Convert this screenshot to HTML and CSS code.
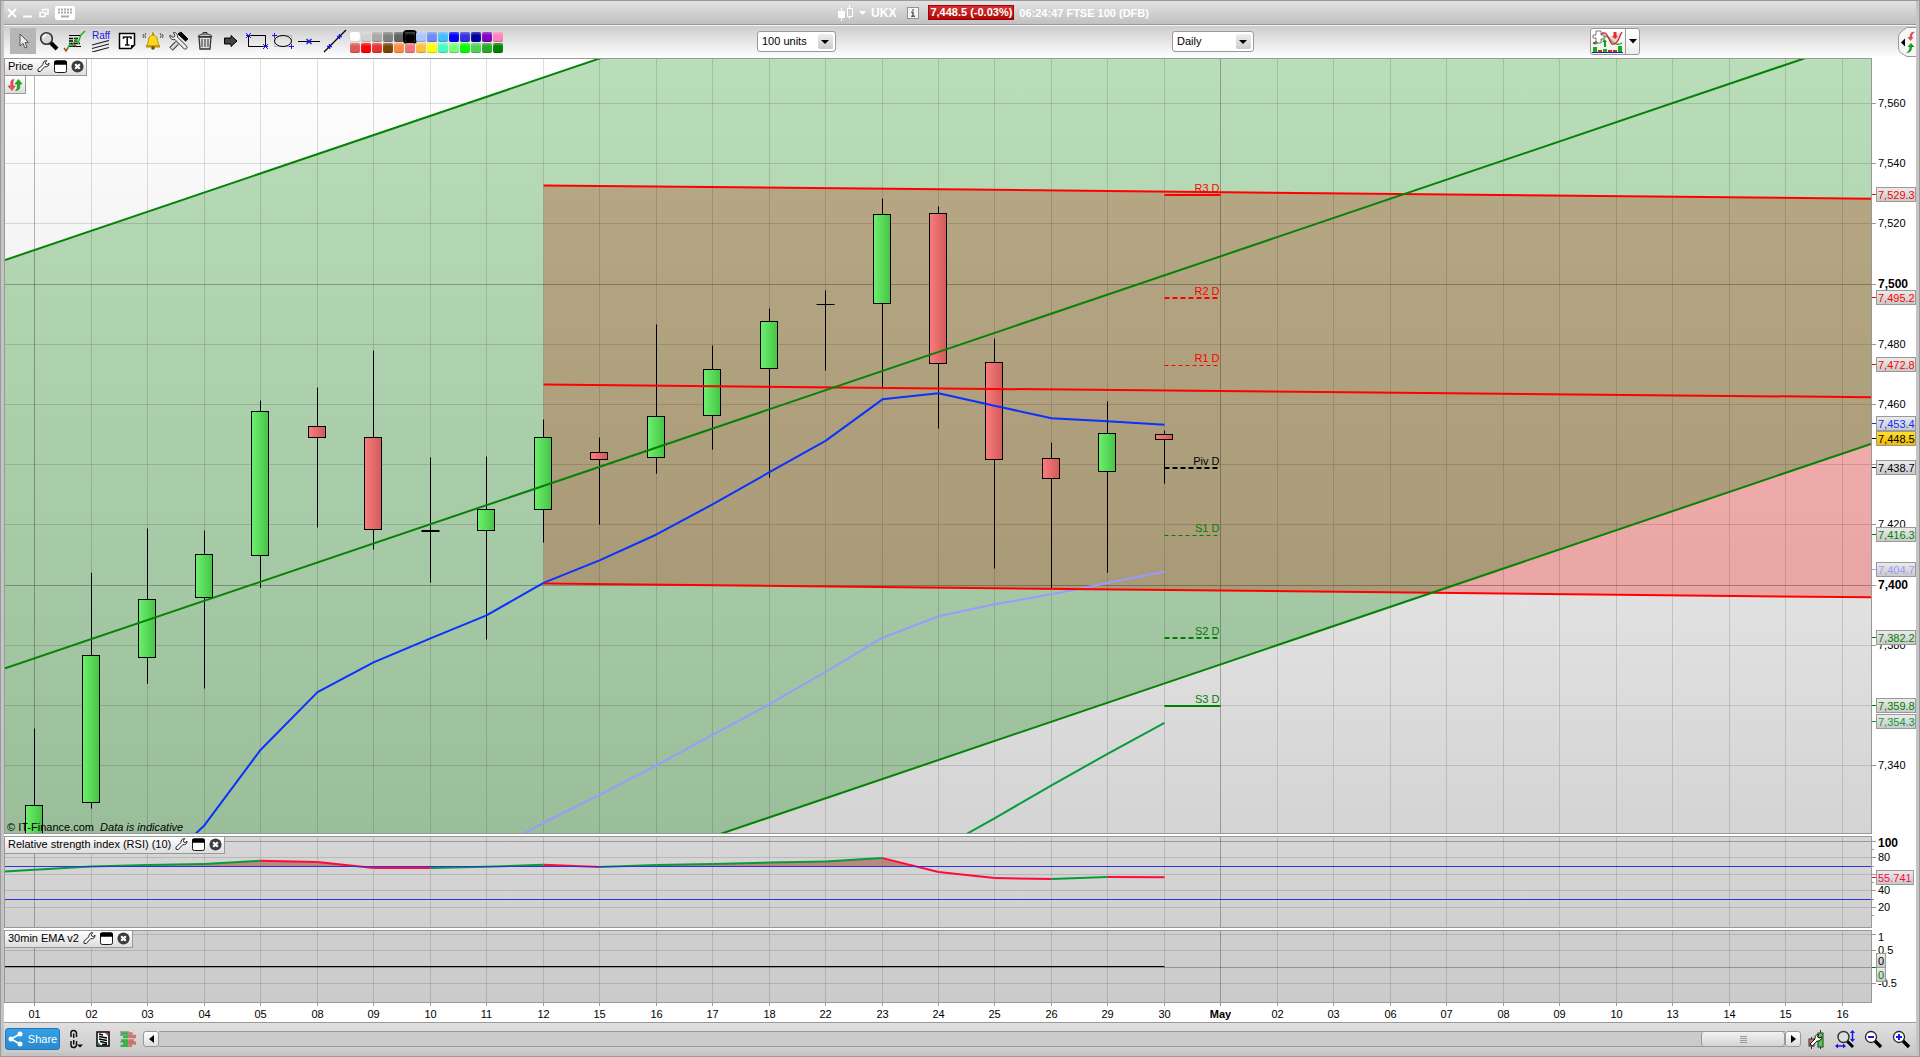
FILE: index.html
```
<!DOCTYPE html>
<html lang="en">
<head>
    <meta charset="UTF-8">
    <meta name="viewport" content="width=device-width, initial-scale=1.0">
    <title>UKX - FTSE 100 (DFB)</title>
    <link rel="stylesheet" href="styles.css">
</head>
<body>
    <!-- Shared symbols for the panel headers -->
    <svg class="symbols" aria-hidden="true">
        <defs>
            <symbol id="i-wrench" viewBox="0 0 14 14">
                <path d="M1 10.5L6.5 5.5C6 3 8 1 10.5 1.2L9 3.2L9.5 5L11.2 5.4L13 4C13 6.8 10.8 8.4 8.4 7.6L3.5 13L1.2 12.8Z" fill="#fff" stroke="#111"/>
            </symbol>
            <symbol id="i-window" viewBox="0 0 14 14">
                <rect x="0.5" y="1" width="13" height="12.5" rx="2" fill="#fff" stroke="#000"/>
                <path d="M0 5V2.5Q0 0.5 2 0.5H12Q14 0.5 14 2.5V5Z" fill="#000"/>
            </symbol>
            <symbol id="i-close" viewBox="0 0 14 14">
                <circle cx="7" cy="7" r="6.5" fill="#3c3c3c"/>
                <path d="M4.5 4.5L9.5 9.5M9.5 4.5L4.5 9.5" stroke="#fff" stroke-width="2.4"/>
            </symbol>
            <symbol id="i-swap" viewBox="0 0 16 14">
                <path d="M7 1.5C4.5 1.5 3.8 3 3.8 5V8H1L5 12.5L8.2 8H6V5C6 3.6 6.2 2.4 7 1.5Z" fill="#e85858" stroke="#c03030" stroke-width="0.6"/>
                <path d="M8.5 12.5C11.5 12.5 12.8 11 12.8 9V6H15L11.5 1.5L8 6H10.3V9C10.3 10.6 9.8 11.8 8.5 12.5Z" fill="#1fae1f" stroke="#108010" stroke-width="0.6"/>
            </symbol>
        </defs>
    </svg>

    <div class="window">
        <header class="titlebar">
            <div class="window-buttons">
                <button aria-label="Close"><svg width="10" height="10"><path d="M1 1L9 9M9 1L1 9" stroke="#fff" stroke-width="2"/></svg></button>
                <button aria-label="Minimise"><svg width="10" height="10"><path d="M0 8.5H9" stroke="#fff" stroke-width="2"/></svg></button>
                <button aria-label="Restore"><svg width="10" height="10"><path d="M3.5 3V1.5H9V6H7M1 4.5H6V8.5H1Z" fill="none" stroke="#fff" stroke-width="1.5"/></svg></button>
                <button aria-label="Keyboard">
                    <svg width="20" height="14">
                        <rect width="20" height="14" rx="2" fill="#fff"/>
                        <path d="M3 3.5H17M3 6.5H17" stroke="#aaa" stroke-width="2" stroke-dasharray="2 1"/>
                        <path d="M6 10.5H14" stroke="#aaa" stroke-width="2"/>
                    </svg>
                </button>
            </div>
            <div class="instrument">
                <svg width="16" height="18">
                    <path d="M3.5 4V17M11.5 1V15" stroke="#fff"/>
                    <rect x="0" y="7" width="7" height="7" fill="#fff"/>
                    <rect x="9.5" y="4.5" width="5" height="8" fill="#cfcfcf" stroke="#fff"/>
                </svg>
                <svg width="7" height="4"><path d="M0 0H7L3.5 4Z" fill="#fff"/></svg>
                <span class="ticker">UKX</span>
                <svg width="12" height="12">
                    <rect x="0.5" y="0.5" width="11" height="11" fill="#f4f4f4" stroke="#8a93a5"/>
                    <path d="M6 2.2V3.8M4.2 5.2H6V9M4.2 9.3H8" fill="none" stroke="#555" stroke-width="1.5"/>
                </svg>
                <span class="quote">7,448.5 (-0.03%)</span>
                <span>06:24:47 FTSE 100 (DFB)</span>
            </div>
        </header>

        <div class="toolbar">
            <div class="tools">
                <button class="tool active" aria-label="Pointer">
                    <svg width="24" height="24"><path d="M9 5V17L12 14.3L14 19L16 18.2L14 13.6H17.5Z" fill="#eee" stroke="#555"/></svg>
                </button>
                <button class="tool" aria-label="Magnifier">
                    <svg width="24" height="24">
                        <path d="M13.5 13.5L20 20" stroke="#000" stroke-width="4"/>
                        <circle cx="9.5" cy="9.5" r="5.8" fill="#d8d8d8" stroke="#333" stroke-width="1.6"/>
                        <path d="M6 9Q6.5 6 9.5 6" fill="none" stroke="#fff" stroke-width="1.6"/>
                    </svg>
                </button>
                <button class="tool" aria-label="Indicators">
                    <svg width="24" height="24">
                        <path d="M6 6.5H18M6 17.5H18" stroke="#000"/>
                        <path d="M6 9.5H16M6 12H14M6 14.5H17" stroke="#000" stroke-width="1.4" stroke-dasharray="4 1"/>
                        <path d="M1 19L3 22L5 19M9 15L13 17" fill="none" stroke="#e02020" stroke-width="1.4"/>
                        <path d="M3 22L7 15L9 17L13 10L15 14L18 6L22 2" fill="none" stroke="#20b030" stroke-width="1.4"/>
                    </svg>
                </button>
                <button class="tool raff" aria-label="Raff regression">
                    <span>Raff</span>
                    <svg width="20" height="12"><path d="M1 5L18 0.5M1 8.5L18 4M1 12L18 7.5" stroke="#222" stroke-width="1.2"/></svg>
                </button>
                <button class="tool" aria-label="Text">
                    <svg width="24" height="24">
                        <path d="M4.5 4.5H19.5V16L16 19.5H4.5Z" fill="#fff" stroke="#000" stroke-width="1.5"/>
                        <path d="M16 19V16H19.5Z" fill="#000"/>
                        <path d="M8.5 10V8H16V10M12.2 8V16M10 16H14.5" fill="none" stroke="#111" stroke-width="1.6"/>
                    </svg>
                </button>
                <button class="tool" aria-label="Alert">
                    <svg width="24" height="24">
                        <path d="M5 17C7.5 15 7 12 8 9C8.7 7 10 6.2 12 6.2S15.3 7 16 9C17 12 16.5 15 19 17Z" fill="#f8d820" stroke="#c09000"/>
                        <path d="M12 3.5V6M5 17.5H19" stroke="#c09000" stroke-width="2"/>
                        <circle cx="12" cy="19" r="1.8" fill="#665500"/>
                        <path d="M5 4Q3 6.5 4.5 9M2.5 5Q1.5 7 2.5 9M19 4Q21 6.5 19.5 9M21.5 5Q22.5 7 21.5 9" fill="none" stroke="#555"/>
                    </svg>
                </button>
                <button class="tool" aria-label="Settings">
                    <svg width="24" height="24">
                        <path d="M10 14L4 20" stroke="#444" stroke-width="5"/>
                        <path d="M10 14L4.5 19.5" stroke="#ddd" stroke-width="2.6"/>
                        <path d="M11 5L14 3L21 10L18.5 12Z" fill="#000" stroke="#000"/>
                        <path d="M3 6L6 8.5L8 7L6.5 3.5C9 3 11 5.5 10.3 8L20 17.5C20.5 19.5 19 20.5 17.3 20L8 10.5C5 11.5 2.5 9 3 6Z" fill="#eee" stroke="#333"/>
                    </svg>
                </button>
                <button class="tool" aria-label="Delete">
                    <svg width="24" height="24">
                        <path d="M6 8H18L17 20H7Z" fill="#ddd" stroke="#333" stroke-width="1.3"/>
                        <path d="M9 10V18M12 10V18M15 10V18" stroke="#555" stroke-width="1.3"/>
                        <path d="M5 7.5Q6 5 12 5T19 7.5Z" fill="#ccc" stroke="#333"/>
                        <path d="M10 5V3.5H14V5" fill="none" stroke="#333"/>
                    </svg>
                </button>
                <button class="tool" aria-label="Arrow">
                    <svg width="24" height="24"><path d="M5.5 9H12V6.5L18 12L12 17.5V15H5.5Z" fill="#444" stroke="#000"/></svg>
                </button>
                <button class="tool" aria-label="Rectangle">
                    <svg width="24" height="24">
                        <rect x="3.5" y="6.5" width="17" height="11" fill="none" stroke="#000"/>
                        <path d="M1 4L6 9M6 4L1 9M1 6.5H6M18 15L23 20M23 15L18 20M18 17.5H23" stroke="#1818ee"/>
                    </svg>
                </button>
                <button class="tool" aria-label="Ellipse">
                    <svg width="24" height="24">
                        <rect x="3.5" y="6.5" width="17" height="11" fill="none" stroke="#bbb"/>
                        <ellipse cx="12" cy="12" rx="8.5" ry="5.5" fill="none" stroke="#000"/>
                        <path d="M1 6.5H6M3.5 4V9M18 17.5H23M20.5 15V20" stroke="#1818ee"/>
                    </svg>
                </button>
                <button class="tool" aria-label="Horizontal line">
                    <svg width="24" height="24">
                        <path d="M1 12.5H23" stroke="#000"/>
                        <path d="M9.5 10L14.5 15M14.5 10L9.5 15" stroke="#1818ee" stroke-width="1.4"/>
                    </svg>
                </button>
                <button class="tool" aria-label="Trend line">
                    <svg width="24" height="24">
                        <path d="M1 23L23 1" stroke="#000" stroke-width="1.3"/>
                        <path d="M4 17.5H9M6.5 15V20M14 7.5H19M16.5 5V10" stroke="#1818ee" stroke-width="1.4"/>
                    </svg>
                </button>
                <div class="palette" id="palette"></div>
            </div>
            <div class="toolbar-cell">
                <span class="picker"><select class="units" aria-label="Units"><option>100 units</option></select></span>
            </div>
            <div class="toolbar-cell">
                <span class="picker"><select class="period" aria-label="Period"><option>Daily</option></select></span>
            </div>
            <div class="toolbar-cell spread">
                <div class="indicator">
                    <button aria-label="Add indicator">
                        <svg width="34" height="24">
                            <path d="M2 14C8 18 11 4 17 8C21 12 24 18 31 14" fill="none" stroke="#20a030" stroke-width="1.4"/>
                            <path d="M2 14C9 14 8 2 14 4C18 6 19 17 23 15C28 13 27 10 31 3" fill="#e0b0b0" fill-opacity="0.5" stroke="#d02020" stroke-width="1.3"/>
                            <path d="M5 2H10V6H13V10H10V14H7L5 12V9H2V6H5Z" fill="#fff" stroke="#778"/>
                            <path d="M13 18V13H11L13.5 10L16 13H15V18Z" fill="#10a010"/>
                            <path d="M22.5 3V7H21L24 10L27 7H25.5V3Z" fill="#e03030"/>
                            <path d="M4 23V18M14 23V20M29 23V17" stroke="#10b010" stroke-width="4"/>
                            <path d="M9 23V21M19 23V21M24 23V21" stroke="#c03030" stroke-width="4"/>
                            <path d="M1 23.5H32" stroke="#2222aa"/>
                        </svg>
                    </button>
                    <button class="drop" aria-label="Indicator list"><svg width="8" height="5"><path d="M0 0H8L4 4.5Z"/></svg></button>
                </div>
                <button class="side-tab" aria-label="Open order panel">
                    <svg width="18" height="30">
                        <path d="M18 0.5H9L3 5Q0.5 7 0.5 10V21Q0.5 24 3 26L9 29.5H18" fill="#f6f6f6" stroke="#999"/>
                        <path d="M3 15.5L7 11.5V19.5Z"/>
                        <path d="M17 5Q12 4 11.5 10H9.5L12.5 14L15.5 10H14Q14 6.5 17 5Z" fill="#e05050"/>
                        <path d="M8 26Q14 26 14 20H16.5L13 16L9.5 20H11.5Q11.5 24 8 26Z" fill="#1a9a1a"/>
                    </svg>
                </button>
            </div>
        </div>

        <main class="charts">
            <section class="panel price">
                <div class="plot">
                    <svg id="price-plot"></svg>
                    <div class="panel-head">
                        <div class="panel-title">
                            <span>Price</span>
                            <button aria-label="Configure price"><svg width="13" height="14"><use href="#i-wrench"/></svg></button>
                            <button aria-label="Detach price"><svg width="13" height="13"><use href="#i-window"/></svg></button>
                            <button aria-label="Close price"><svg width="13" height="13"><use href="#i-close"/></svg></button>
                        </div>
                        <button class="swap" aria-label="Buy or sell"><svg width="16" height="14"><use href="#i-swap"/></svg></button>
                    </div>
                    <p class="copyright">© IT-Finance.com&nbsp; <em>Data is indicative</em></p>
                </div>
                <svg class="axis" id="price-axis"></svg>
            </section>
            <section class="panel rsi">
                <div class="plot">
                    <svg id="rsi-plot"></svg>
                    <div class="panel-head">
                        <div class="panel-title">
                            <span>Relative strength index (RSI) (10)</span>
                            <button aria-label="Configure RSI"><svg width="13" height="14"><use href="#i-wrench"/></svg></button>
                            <button aria-label="Detach RSI"><svg width="13" height="13"><use href="#i-window"/></svg></button>
                            <button aria-label="Close RSI"><svg width="13" height="13"><use href="#i-close"/></svg></button>
                        </div>
                    </div>
                </div>
                <svg class="axis" id="rsi-axis"></svg>
            </section>
            <section class="panel ema">
                <div class="plot">
                    <svg id="ema-plot"></svg>
                    <div class="panel-head">
                        <div class="panel-title">
                            <span>30min EMA v2</span>
                            <button aria-label="Configure EMA"><svg width="13" height="14"><use href="#i-wrench"/></svg></button>
                            <button aria-label="Detach EMA"><svg width="13" height="13"><use href="#i-window"/></svg></button>
                            <button aria-label="Close EMA"><svg width="13" height="13"><use href="#i-close"/></svg></button>
                        </div>
                    </div>
                </div>
                <svg class="axis" id="ema-axis"></svg>
            </section>
            <svg class="dates" id="dates"></svg>
        </main>

        <footer class="bottombar">
            <button class="share">
                <svg width="15" height="16">
                    <path d="M12 3L3 8L12 13" fill="none" stroke="#fff" stroke-width="1.6"/>
                    <circle cx="12" cy="3" r="2.5" fill="#fff"/><circle cx="3" cy="8" r="2.5" fill="#fff"/><circle cx="12" cy="13" r="2.5" fill="#fff"/>
                </svg>
                Share
            </button>
            <div class="bottom-tools">
                <button aria-label="Link charts">
                    <svg width="18" height="20">
                        <path d="M3 8V4Q3 1.5 5.5 1.5T8.5 4V8M5.7 4.5V9M3 12V16Q3 18.5 5.5 18.5T8.5 16V12M5.7 11V15.5" fill="none" stroke="#111" stroke-width="1.5"/>
                        <path d="M9 15.5H15L12 18.5Z"/>
                    </svg>
                </button>
                <button aria-label="Report">
                    <svg width="14" height="16">
                        <rect x="1" y="1" width="12" height="14" fill="#fff" stroke="#000" stroke-width="1.5"/>
                        <path d="M3 3L7 4M3 5.5L11 7M3 8L11 9.500M4 10.500L11 12M6 13.500H11" stroke="#000" stroke-width="1.300"/>
                        <path d="M9 2H12V5Z" fill="#e04040"/><path d="M2 14V11L5 14Z" fill="#20a020"/>
                    </svg>
                </button>
                <button aria-label="Market depth">
                    <svg width="17" height="16">
                        <path d="M0.5 2.5H8.5M3 6H8.5M1 9.5H8.5M3 12.5H8.5M0.5 15H8.5" stroke="#30b840" stroke-width="2.6"/>
                        <path d="M8.5 2.5H12.5M8.5 6H16M8.5 9.5H14M8.5 12.5H16M8.5 15H12" stroke="#e46c6c" stroke-width="2.6"/>
                        <path d="M0 0.8H9M0 4.3H9M8.5 4.3H16M0 11H16" stroke="#555" stroke-width="0.6"/>
                    </svg>
                </button>
            </div>
            <div class="scrollbar">
                <button class="scroll-end" aria-label="Scroll left"><svg width="5" height="8"><path d="M5 0V8L0 4Z"/></svg></button>
                <div class="track"><div class="thumb"><svg width="7" height="7"><path d="M0 0.5H7M0 2.5H7M0 4.5H7M0 6.5H7" stroke="#999"/></svg></div></div>
                <button class="scroll-end" aria-label="Scroll right"><svg width="5" height="8"><path d="M0 0V8L5 4Z"/></svg></button>
            </div>
            <div class="zoom-tools">
                <button aria-label="Chart settings">
                    <svg width="20" height="20">
                        <rect x="11" y="4" width="5" height="14" fill="#48d048" stroke="#333"/><path d="M13.5 1V4M13.5 18V20M4.5 8V20" stroke="#333"/>
                        <rect x="2" y="10" width="5" height="7" fill="#e06c6c" stroke="#333"/>
                        <path d="M3 15L8 10C7.5 7 9 5.5 11.5 5.5L10.5 8L12 9L14.5 8C14.5 11 12.5 12.5 10 12L5.5 17Z" fill="#fff" stroke="#111"/>
                    </svg>
                </button>
                <button aria-label="Fit zoom">
                    <svg width="20" height="20">
                        <path d="M12 12L18 18" stroke="#000" stroke-width="3"/><circle cx="8.5" cy="8" r="5.5" fill="#ddd" stroke="#333" stroke-width="1.4"/>
                        <path d="M17.5 2V12M1 17H9" stroke="#1818ee" stroke-width="1.5"/>
                        <path d="M15 4L17.5 1L20 4ZM15 10L17.5 13L20 10ZM3 14.5L0 17L3 19.5ZM8 14.5L11 17L8 19.5Z" fill="#1818ee"/>
                    </svg>
                </button>
                <button aria-label="Zoom out">
                    <svg width="20" height="20">
                        <path d="M11 11L18 18" stroke="#000" stroke-width="3.4"/><circle cx="8" cy="8" r="5.5" fill="#fff" stroke="#222" stroke-width="1.3"/>
                        <path d="M5 8H11" stroke="#1818ee" stroke-width="2"/>
                    </svg>
                </button>
                <button aria-label="Zoom in">
                    <svg width="20" height="20">
                        <path d="M11 11L18 18" stroke="#000" stroke-width="3.4"/><circle cx="8" cy="8" r="5.5" fill="#fff" stroke="#222" stroke-width="1.3"/>
                        <path d="M5 8H11M8 5V11" stroke="#1818ee" stroke-width="2"/>
                    </svg>
                </button>
            </div>
        </footer>
    </div>

    <script src="script.js"></script>
</body>
</html>
```
FILE: styles.css
```
* { box-sizing: border-box; }
body {
    margin: 0;
    font-family: "Liberation Sans", Arial, sans-serif;
    font-size: 11px;
    color: #000;
}
button {
    display: flex;
    align-items: center;
    justify-content: center;
    padding: 0;
    border: none;
    background: none;
    font: inherit;
    cursor: pointer;
}
svg { display: block; }
.symbols { position: absolute; width: 0; height: 0; }

.window {
    display: flex;
    flex-direction: column;
    height: 100vh;
    border: 4px solid #c4c4c4;
    border-top: 1px solid #999;
    background: #fff;
    outline: 1px solid #999;
    outline-offset: -1px;
}

/* Title bar */
.titlebar {
    display: flex;
    align-items: center;
    flex: none;
    height: 24px;
    padding-left: 3px;
    background: linear-gradient(#e2e2e2, #c0c0c0);
    border-bottom: 1px solid #999;
}
.window-buttons { display: flex; align-items: center; gap: 6px; }
.instrument {
    flex: 1;
    display: flex;
    align-items: center;
    justify-content: center;
    gap: 5px;
    padding-right: 4px;
    color: #fff;
    font-weight: bold;
}
.ticker { margin-right: 6px; font-size: 12px; }
.quote {
    margin-left: 4px;
    padding: 0 1px;
    line-height: 13px;
    background: linear-gradient(#d83030, #b00808);
    border: 1px solid #a00000;
}

/* Toolbar */
.toolbar {
    display: grid;
    grid-template-columns: 753fr 415fr 418fr 326fr;
    flex: none;
    height: 33px;
    background: linear-gradient(#cdcdcd, #fff);
    border-top: 1px solid #f4f4f4;
}
.tools { display: flex; align-items: center; padding-left: 6px; }
.tool { width: 26px; height: 26px; margin-bottom: 2px; }
.tool.active { background: #b6b6b6; }
.raff { flex-direction: column; color: #2020e8; font-size: 10px; line-height: 9px; }
.palette {
    display: grid;
    grid-template-columns: repeat(14, 10px);
    gap: 1px;
    margin-left: 2px;
}
.swatch {
    width: 10px;
    height: 10px;
    border-radius: 2px;
    box-shadow: inset 0 -1px 1px rgba(0,0,0,0.2), inset 0 2px 2px rgba(255,255,255,0.25);
}
.swatch.selected { outline: 2px solid #000; }
.toolbar-cell { display: flex; align-items: center; }
.spread { justify-content: space-between; }
.picker { position: relative; margin-bottom: 2px; }
.picker select {
    appearance: none;
    height: 21px;
    padding: 0 4px;
    font: inherit;
    color: #000;
    background: #fff;
    border: 1px solid #999;
    border-radius: 3px;
}
.picker .units { width: 79px; }
.picker .period { width: 82px; }
.picker::before {
    content: "";
    position: absolute;
    top: 3px;
    right: 3px;
    width: 15px;
    height: 15px;
    background: linear-gradient(#eee, #ccc);
    border-radius: 2px;
    pointer-events: none;
}
.picker::after {
    content: "";
    position: absolute;
    top: 9px;
    right: 7px;
    border: 4px solid transparent;
    border-top-color: #000;
    border-bottom: none;
    pointer-events: none;
}
.indicator {
    display: flex;
    height: 27px;
    margin-bottom: 2px;
    background: linear-gradient(#fff, #eee);
    border: 1px solid #999;
    border-radius: 3px;
}
.indicator .drop { width: 14px; border-left: 1px solid #999; }

/* Charts */
.charts { flex: 1; display: flex; flex-direction: column; min-height: 0; }
.panel { display: flex; margin-bottom: 2px; }
.price { flex: 1; min-height: 0; }
.rsi { flex: none; height: 92px; }
.ema { flex: none; height: 73px; margin-bottom: 0; }
.plot {
    position: relative;
    flex: 1;
    min-width: 0;
    border: 1px solid #999;
}
.plot > svg { width: 100%; height: 100%; }
.price .plot { background: linear-gradient(#fff, #d4d4d4); }
.rsi .plot { background: linear-gradient(#d6d6d6, #d0d0d0); }
.ema .plot { background: linear-gradient(#cfcfcf, #cbcbcb); }
.axis { flex: none; width: 44px; height: 100%; }
.dates { flex: none; width: 100%; height: 19px; }
.panel-head { position: absolute; top: 0; left: 0; }
.panel-title {
    display: flex;
    align-items: center;
    gap: 4px;
    height: 17px;
    padding: 0 2px 2px 3px;
    background: linear-gradient(#fff, #ddd);
    border: solid #999;
    border-width: 0 1px 1px 0;
    white-space: nowrap;
}
.swap {
    width: 21px;
    height: 18px;
    background: linear-gradient(#fff, #ddd);
    border: solid #999;
    border-width: 0 1px 1px 0;
}
.copyright { position: absolute; left: 2px; bottom: 0; margin: 0; line-height: 12px; }

.grid { stroke: rgba(0,0,0,0.13); }
.grid-major { stroke: rgba(0,0,0,0.28); }
.tick { stroke: #999; }
.label { font-size: 11px; }
.label-major { font-size: 12px; font-weight: bold; }
.label-date { text-anchor: middle; }
.label-month { text-anchor: middle; font-weight: bold; }
.label-pivot { text-anchor: end; }
.line { fill: none; stroke-width: 2; stroke-linejoin: round; }
.channel-up { fill: rgba(0,128,0,0.27); }
.channel-flat { fill: rgba(255,0,0,0.27); }
.wick { stroke: #000; }
.candle { stroke: #000; }
.overbought { fill: rgba(160,60,50,0.5); }
.tag { stroke: #999; }

/* Bottom bar */
.bottombar {
    display: flex;
    align-items: center;
    flex: none;
    height: 31px;
    padding: 2px 5px 0 1px;
    background: linear-gradient(#e0e0e0, #cacaca);
    border-top: 1px solid #999;
}
.share {
    gap: 5px;
    width: 55px;
    height: 22px;
    color: #fff;
    background: linear-gradient(#36a0e4, #2a8ad0);
    border: 1px solid #1f78bb;
    border-radius: 3px;
}
.bottom-tools { display: flex; align-items: center; gap: 10px; margin: 0 6px 0 8px; }
.scrollbar { flex: 1; display: flex; height: 16px; }
.scroll-end {
    width: 16px;
    background: linear-gradient(#fff, #ddd);
    border: 1px solid #999;
    border-radius: 3px;
}
.track {
    flex: 1;
    display: flex;
    justify-content: flex-end;
    background: #cbcbcb;
    border: solid #999;
    border-width: 1px 0;
}
.thumb {
    display: flex;
    align-items: center;
    justify-content: center;
    width: 84px;
    background: linear-gradient(#f2f2f2, #d4d4d4);
    border: solid #999;
    border-width: 0 1px;
    border-radius: 3px;
}
.zoom-tools { display: flex; gap: 8px; margin-left: 6px; }
```
FILE: script.js
```
const NS = 'http://www.w3.org/2000/svg';

const DATES = ['01', '02', '03', '04', '05', '08', '09', '10', '11', '12', '15', '16', '17', '18', '22', '23', '24', '25', '26', '29', '30',
    'May', '02', '03', '06', '07', '08', '09', '10', '13', '14', '15', '16'];
const MAJOR_DATES = [0, 21];

// open, high, low, close
const CANDLES = [
    [7310.0, 7352.3, 7305.0, 7326.7],
    [7327.7, 7404.1, 7325.7, 7376.6],
    [7375.9, 7418.8, 7367.2, 7395.2],
    [7395.8, 7418.1, 7365.6, 7410.1],
    [7409.8, 7461.3, 7399.1, 7457.6],
    [7452.7, 7465.6, 7419.1, 7449.0],
    [7449.0, 7477.9, 7411.8, 7418.4],
    [7418.1, 7442.4, 7400.8, 7417.8],
    [7418.1, 7442.7, 7381.9, 7425.1],
    [7425.1, 7455.0, 7414.1, 7449.0],
    [7444.0, 7449.0, 7420.1, 7441.7],
    [7442.4, 7486.6, 7437.0, 7456.0],
    [7456.3, 7479.6, 7445.0, 7471.6],
    [7471.9, 7491.9, 7435.7, 7487.6],
    [7493.2, 7497.9, 7471.3, 7493.2],
    [7493.5, 7528.4, 7465.3, 7523.1],
    [7523.4, 7525.8, 7452.0, 7473.6],
    [7473.9, 7481.9, 7405.5, 7441.7],
    [7442.0, 7447.3, 7398.8, 7435.4],
    [7437.7, 7461.0, 7404.1, 7450.3],
    [7450.0, 7451.3, 7433.7, 7448.3]
];

// first = index of the bar that the series starts at
const AVERAGES = [
    { color: '#0a32ff', first: 2, values: [7302, 7320.2, 7345.2, 7364.4, 7374.3, 7382.3, 7389.9, 7400.7, 7408.2, 7416.8, 7426.8, 7437.5, 7447.9, 7461.7, 7463.7, 7459.6, 7455.4, 7454.4, 7453.3] },
    { color: '#9a9aff', first: 8, values: [7310.6, 7321, 7330.3, 7340.1, 7350.2, 7360.4, 7371.1, 7382.5, 7389.6, 7393.6, 7396.9, 7400.7, 7404.4] },
    { color: '#069c3c', first: 16, values: [7312, 7322.5, 7333.4, 7343.9, 7354.2] }
];

const PIVOTS = [
    { name: 'R3 D', price: 7529.3, color: '#ff0000', width: 2 },
    { name: 'R2 D', price: 7495.2, color: '#ff0000', width: 2, dash: '5 3' },
    { name: 'R1 D', price: 7472.8, color: '#ff0000', width: 1, dash: '4 3' },
    { name: 'Piv D', price: 7438.7, color: '#000000', width: 2, dash: '5 3' },
    { name: 'S1 D', price: 7416.3, color: '#008000', width: 1, dash: '4 3' },
    { name: 'S2 D', price: 7382.2, color: '#008000', width: 2, dash: '5 3' },
    { name: 'S3 D', price: 7359.8, color: '#008000', width: 2 }
];

const PRICE_TAGS = [
    [7529.3, '#ff0000'], [7495.2, '#ff0000'], [7472.8, '#ff0000'], [7453.4, '#0a32ff'],
    [7438.7, '#000000'], [7448.5, '#000000', 'url(#tag-gold)'], [7416.3, '#008000'],
    [7404.7, '#9a9aff'], [7382.2, '#008000'], [7359.8, '#008000'], [7354.3, '#069c3c']
];

const RSI = [61.4, 65.5, 69.5, 71.2, 72.4, 76.4, 74.8, 67.6, 67.5, 69.1, 71.5, 68.7, 71.2, 72.4, 74.3, 75.5, 79.6, 62.7, 55.4, 54.2, 56.6, 56.5];

const COLORS = ['#ffffff', '#d2d2d2', '#aaaaaa', '#828282', '#646464', '#000000', '#aac8fa', '#6e8cfa', '#46befa', '#0000fa', '#3232dc', '#0000a0', '#8200be', '#ff82be',
    '#dc5a5a', '#ff0000', '#eb3232', '#784600', '#ff8c46', '#f07878', '#ffbe46', '#ffff00', '#46ffbe', '#78ff78', '#00ff00', '#50d250', '#28aa28', '#008200'];

function add(parent, tag, attrs, text) {
    const node = document.createElementNS(NS, tag);
    for (const key in attrs) node.setAttribute(key, attrs[key]);
    if (text !== undefined) node.textContent = text;
    parent.appendChild(node);
    return node;
}

function line(svg, x1, y1, x2, y2, attrs) {
    return add(svg, 'line', Object.assign({ x1, y1, x2, y2 }, attrs));
}

// centre of the nearest pixel, keeps 1px strokes sharp
const crisp = v => Math.round(v - 0.5) + 0.5;

function start(id) {
    const svg = document.getElementById(id);
    svg.innerHTML = '';
    const box = svg.getBoundingClientRect();
    return { svg, w: box.width, h: box.height };
}

function gradient(svg, id, from, to, vertical) {
    const g = add(svg, 'linearGradient', vertical ? { id, x2: 0, y2: 1 } : { id });
    add(g, 'stop', { offset: 0, 'stop-color': from });
    add(g, 'stop', { offset: 1, 'stop-color': to });
}

function barX(i, w) {
    const step = w * 56.48 / 1866;
    return Math.round(step * (i + 0.519)) + 0.5;
}

function scale(top, bottom, h) {
    return v => (top - v) / (top - bottom) * h;
}

function drawGrid(c, y, values, majors) {
    DATES.forEach((d, i) => {
        const x = barX(i, c.w);
        line(c.svg, x, 0, x, c.h, { class: MAJOR_DATES.includes(i) ? 'grid-major' : 'grid' });
    });
    values.forEach(v => {
        line(c.svg, 0, crisp(y(v)), c.w, crisp(y(v)), { class: majors.includes(v) ? 'grid-major' : 'grid' });
    });
}

function drawAxis(svg, y, values, bold, format) {
    values.forEach(v => {
        const py = crisp(y(v)) + 1;
        line(svg, 0, py, 4, py, { class: 'tick' });
        // the topmost label stays inside the panel
        add(svg, 'text', { x: 6, y: Math.max(11, py + 3), class: bold.includes(v) ? 'label-major' : 'label' }, format(v));
    });
}

function drawTag(svg, py, text, color, fill) {
    const label = add(svg, 'text', { x: 6, y: py + 4, class: 'label', fill: color }, text);
    const width = Math.min(39, Math.round(label.getComputedTextLength()) + 3);
    const rect = add(svg, 'rect', { x: 4.5, y: py - 7, width, height: 14, class: 'tag', fill: fill || 'url(#tag-grey)' });
    svg.insertBefore(rect, label);
}

function path(points) {
    return points.map(p => p.join(',')).join(' ');
}

function drawPrice() {
    const c = start('price-plot');
    const y = scale(7574.8, 7317.6, c.h);
    const x = i => barX(i, c.w);
    const levels = [];
    for (let p = 7340; p <= 7560; p += 20) levels.push(p);

    const defs = add(c.svg, 'defs', {});
    gradient(defs, 'candle-up', '#6ef06e', '#46c346');
    gradient(defs, 'candle-down', '#fa7d7d', '#d25a5a');

    // flat channel starts on the 12th, rising one spans the whole plot
    const flat = [[7532.8, 7528.4], [7466.6, 7462.4], [7400.5, 7395.9]];
    const rising = [[7508.0, 7718.2], [7372.3, 7582.5], [7236.7, 7446.9]];
    const left = x(9);
    add(c.svg, 'polygon', { class: 'channel-flat', points: path([[left, y(flat[0][0])], [c.w, y(flat[0][1])], [c.w, y(flat[2][1])], [left, y(flat[2][0])]]) });
    add(c.svg, 'polygon', { class: 'channel-up', points: path([[0, y(rising[0][0])], [c.w, y(rising[0][1])], [c.w, y(rising[2][1])], [0, y(rising[2][0])]]) });

    drawGrid(c, y, levels, [7400, 7500]);

    CANDLES.forEach(([open, high, low, close], i) => {
        const cx = x(i);
        const top = crisp(y(Math.max(open, close)));
        const bottom = crisp(y(Math.min(open, close)));
        line(c.svg, cx, y(high), cx, y(low), { class: 'wick' });
        if (bottom - top < 2) {
            line(c.svg, cx - 9, (top + bottom) / 2, cx + 9, (top + bottom) / 2, { class: 'wick', 'stroke-width': bottom - top + 1 });
        } else {
            add(c.svg, 'rect', { class: 'candle', x: cx - 9, y: top, width: 17, height: bottom - top, fill: close >= open ? 'url(#candle-up)' : 'url(#candle-down)' });
        }
    });

    AVERAGES.forEach(a => {
        add(c.svg, 'polyline', { class: 'line', stroke: a.color, points: path(a.values.map((v, i) => [x(a.first + i), y(v)])) });
    });
    flat.forEach(l => line(c.svg, left, y(l[0]), c.w, y(l[1]), { class: 'line', stroke: '#ff0000' }));
    rising.forEach(l => line(c.svg, 0, y(l[0]), c.w, y(l[1]), { class: 'line', stroke: '#068206' }));

    PIVOTS.forEach(p => {
        const py = p.width === 2 ? Math.floor(y(p.price)) : crisp(y(p.price));
        line(c.svg, x(20), py, x(21), py, { stroke: p.color, 'stroke-width': p.width, 'stroke-dasharray': p.dash || 'none' });
        add(c.svg, 'text', { x: x(21) - 1, y: Math.floor(py) - 3, class: 'label label-pivot', fill: p.color }, p.name);
    });

    const axis = start('price-axis').svg;
    const axisDefs = add(axis, 'defs', {});
    gradient(axisDefs, 'tag-grey', '#ececec', '#c8c8c8', true);
    gradient(axisDefs, 'tag-gold', '#ffe030', '#f0b800', true);
    const format = v => v.toLocaleString('en-GB');
    drawAxis(axis, y, levels, [7400, 7500], format);
    PRICE_TAGS.forEach(([price, color, fill]) => {
        const py = Math.floor(y(price)) + 0.5;
        line(axis, 0, py, 4, py, { stroke: color });
        drawTag(axis, py, format(price), color, fill);
    });
}

function drawRsi() {
    const c = start('rsi-plot');
    const y = scale(105.2, -3.9, c.h);
    drawGrid(c, y, [100, 80, 60, 40, 20], [100]);

    const points = RSI.map((v, i) => [barX(i - 1, c.w), y(v)]);
    const clip = add(c.svg, 'clipPath', { id: 'over-70' });
    add(clip, 'rect', { x: 0, y: 0, width: c.w, height: y(70) });
    const area = points.concat([[points[points.length - 1][0], c.h], [points[0][0], c.h]]);
    add(c.svg, 'polygon', { class: 'overbought', points: path(area), 'clip-path': 'url(#over-70)' });
    for (let i = 1; i < points.length; i++) {
        line(c.svg, points[i - 1][0], points[i - 1][1], points[i][0], points[i][1], { class: 'line', stroke: RSI[i] > RSI[i - 1] ? '#069c3c' : '#ff0a3c' });
    }
    [70, 30].forEach(v => line(c.svg, 0, crisp(y(v)), c.w, crisp(y(v)), { stroke: '#3232dc' }));

    const axis = start('rsi-axis').svg;
    drawAxis(axis, y, [100, 80, 60, 40, 20], [100], String);
    [90, 70, 50, 30, 10].forEach(v => line(axis, 0, crisp(y(v)) + 1, 2, crisp(y(v)) + 1, { class: 'tick' }));
    const py = crisp(y(56.5)) + 1;
    line(axis, 0, py, 4, py, { stroke: '#ff0a3c' });
    drawTag(axis, py, '55.741', '#ff0a3c');
}

function drawEma() {
    const c = start('ema-plot');
    const y = scale(1.106, -1.046, c.h);
    drawGrid(c, y, [1, 0.5, 0, -0.5], [0]);
    const zero = crisp(y(0));
    line(c.svg, 0, zero - 1, barX(20, c.w), zero - 1, { stroke: '#000' });

    const axis = start('ema-axis').svg;
    drawAxis(axis, y, [1, 0.5, -0.5], [], String);
    line(axis, 0, zero + 1, 4, zero + 1, { stroke: '#008000' });
    drawTag(axis, zero - 6, '0', '#000000');
    drawTag(axis, zero + 8, '0', '#008000');
}

function drawDates() {
    const c = start('dates');
    const w = document.getElementById('price-plot').getBoundingClientRect().width;
    DATES.forEach((d, i) => {
        const x = barX(i, w) + 1;
        line(c.svg, x, 0, x, 3, { class: 'tick' });
        add(c.svg, 'text', { x, y: 15, class: d === 'May' ? 'label label-month' : 'label label-date' }, d);
    });
}

function drawPalette() {
    const palette = document.getElementById('palette');
    COLORS.forEach(color => {
        const swatch = document.createElement('button');
        swatch.className = color === '#000000' ? 'swatch selected' : 'swatch';
        swatch.style.backgroundColor = color;
        swatch.setAttribute('aria-label', 'Colour ' + color);
        palette.appendChild(swatch);
    });
}

function draw() {
    drawPrice();
    drawRsi();
    drawEma();
    drawDates();
}

drawPalette();
draw();
window.addEventListener('resize', draw);
```
